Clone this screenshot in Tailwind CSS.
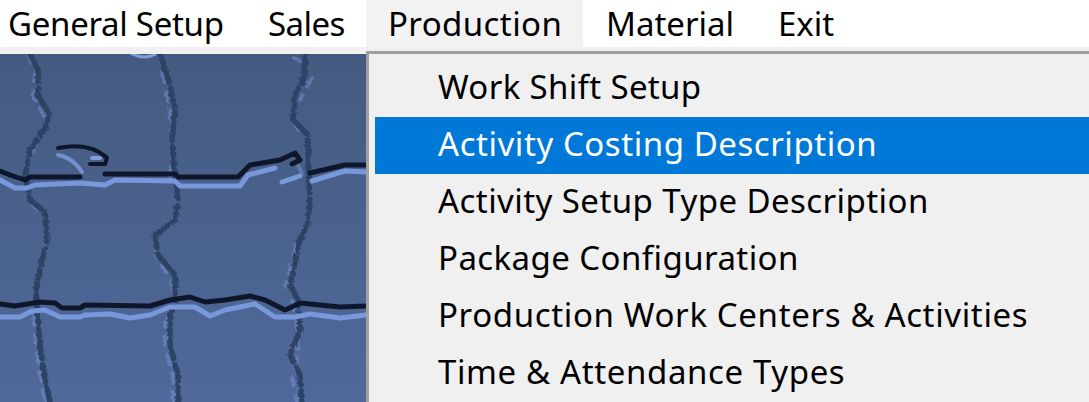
<!DOCTYPE html>
<html lang="en">
<head>
    <meta charset="UTF-8">
    <title>Production Menu</title>
    <script src="https://cdn.jsdelivr.net/npm/@tailwindcss/browser@4"></script>
</head>
<body class="w-[1089px] h-[402px] overflow-hidden bg-[#f0f0f0] text-black font-['Noto_Sans',sans-serif] text-[33px] leading-none">
    <!-- menu bar -->
    <nav class="flex h-[47px] bg-white pl-2">
        <div class="flex items-center w-[238px] pb-[1px] tracking-[-0.3px]">General Setup</div>
        <div class="flex items-center w-[120px] pl-[22px] pb-[1px] tracking-[-0.55px]">Sales</div>
        <div class="flex items-center w-[217px] pl-[22px] pb-[1px] tracking-[0.4px] bg-[#f2f2f2]">Production</div>
        <div class="flex items-center w-[173px] pl-[23px] pb-[1px]">Material</div>
        <div class="flex items-center pl-[22px] pb-[1px]">Exit</div>
    </nav>

    <div class="flex h-[355px]">
        <!-- desktop wallpaper -->
        <div class="w-[366px] shrink-0 pt-[7px]">
            <svg class="block w-[366px] h-[348px]" viewBox="0 54 366 348" fill="none" stroke-linejoin="round" stroke-linecap="round">
                <defs>
                    <linearGradient id="wall" x1="0" y1="0" x2="0" y2="1">
                        <stop offset="0" stop-color="#445a80"/>
                        <stop offset="1" stop-color="#50699a"/>
                    </linearGradient>
                    <filter id="rough" x="-5%" y="-5%" width="110%" height="110%">
                        <feTurbulence type="fractalNoise" baseFrequency="0.3" numOctaves="2" seed="4"/>
                        <feDisplacementMap in="SourceGraphic" scale="5"/>
                        <feGaussianBlur stdDeviation="0.7"/>
                    </filter>
                    <filter id="soft">
                        <feGaussianBlur stdDeviation="0.6"/>
                    </filter>
                </defs>
                <rect x="0" y="54" width="366" height="348" fill="url(#wall)"/>
                <path d="M132 54Q145 60 156 54" stroke="#7d9fe0" stroke-width="3"/>
                <!-- vertical cracks -->
                <g filter="url(#rough)">
                    <g stroke="#7391cf" stroke-width="3.5" stroke-dasharray="10 9" opacity=".55">
                        <path d="M28 54L35 72L33 97L45 118L43 130L33 152M30 200L40 216M46 240L42 262L36 292L34 322L36 347L41 382L46 402"/>
                        <path d="M160 54L165 87L170 112L172 142L170 177M178 200L172 222L155 236L156 257L170 278L175 302L165 322L165 347L173 377L173 402"/>
                        <path d="M294 58L302 62M312 78L300 100M293 122L303 137M298 165L303 176M310 210L307 222L297 242L285 287M293 302L298 332L298 357L292 377L297 402"/>
                    </g>
                    <g stroke="#2f4365" stroke-width="5.5" stroke-dasharray="30 6 18 5">
                        <path d="M30 54L38 70L38 95L50 115L45 128L30 150L25 175L30 200L45 212L47 240L42 260L36 290L38 320L40 345L45 380L50 402"/>
                        <path d="M160 54L170 85L175 110L172 140L175 175L178 200L175 220L155 235L158 255L175 275L175 300L170 320L170 345L178 375L178 402"/>
                        <path d="M305 54L305 75L295 95L293 120L308 135L308 165L310 200L308 222L300 240L290 285L298 300L300 330L290 355L300 375L302 402"/>
                    </g>
                </g>
                <g filter="url(#soft)">
                    <!-- small swirl -->
                    <path d="M58 155Q72 157 82 172" stroke="#7391cf" stroke-width="4"/>
                    <path d="M58 148Q90 142 107 158L105 164L90 164" stroke="#10192c" stroke-width="4"/>
                    <path d="M92 158L100 158" stroke="#7d9fe0" stroke-width="4"/>
                    <!-- first horizontal crack -->
                    <path d="M0 180L15 188L27 188L35 185L80 183L105 185L115 180L175 181L180 186L240 186L248 175L275 168M282 182L300 176M312 181L345 171L366 172" stroke="#7898db" stroke-width="5"/>
                    <path d="M0 171L10 175L25 180L30 177L80 177M105 174L175 174L178 177L238 177L250 165L280 160L295 153L300 160L292 164M310 173L345 165L366 165" stroke="#10172b" stroke-width="5"/>
                    <!-- second horizontal crack -->
                    <path d="M0 317L20 317L32 311L45 310L60 317L80 317L85 315L110 314L130 318L150 315L170 307L195 307L210 316L225 310L255 304L275 317L295 317L310 314L340 318L366 315" stroke="#7898db" stroke-width="5"/>
                    <path d="M0 304L15 306L40 302L55 303L62 308L80 308L85 305L150 306L170 300L190 297L205 302L225 300L250 296L265 300L285 310L300 303L340 307L366 306" stroke="#10172b" stroke-width="5"/>
                </g>
            </svg>
        </div>

        <!-- production dropdown -->
        <div class="flex-1 pt-[4px]">
            <div class="h-[351px] border-t-[3px] border-l-[3px] border-[#a0a0a0] bg-[#f0f0f0] pt-[6px] pl-[6px]">
                <div class="flex items-center h-[57px] pl-[63px] pb-[5px] tracking-[0.34px]">Work Shift Setup</div>
                <div class="flex items-center h-[57px] pl-[63px] pb-[5px] tracking-[0.55px] bg-[#0078d7] text-white">Activity Costing Description</div>
                <div class="flex items-center h-[57px] pl-[63px] pb-[5px] tracking-[0.43px]">Activity Setup Type Description</div>
                <div class="flex items-center h-[57px] pl-[63px] pb-[5px] tracking-[0.42px]">Package Configuration</div>
                <div class="flex items-center h-[57px] pl-[63px] pb-[5px] tracking-[0.64px]">Production Work Centers &amp; Activities</div>
                <div class="flex items-center h-[57px] pl-[63px] pb-[5px] tracking-[0.62px]">Time &amp; Attendance Types</div>
            </div>
        </div>
    </div>
</body>
</html>
